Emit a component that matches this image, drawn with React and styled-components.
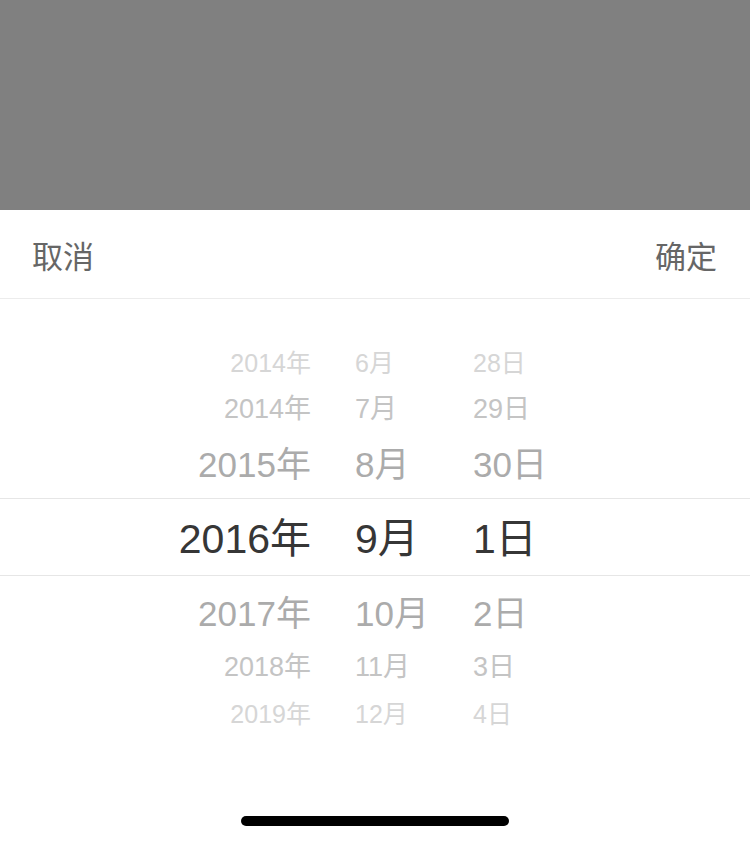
import React from "react";
import styled, { createGlobalStyle } from "styled-components";

const Global = createGlobalStyle`
  html, body { margin: 0; padding: 0; background: #808080; }
  body { font-family: "Liberation Sans", "Noto Sans CJK SC", sans-serif; }
  #root { min-height: 844px; }
`;

const Screen = styled.div`
  width: 750px;
  height: 844px;
  display: flex;
  flex-direction: column;
  background: #808080;
  overflow: hidden;
`;

const Mask = styled.div`
  height: 210px;
  flex: none;
`;

const Sheet = styled.div`
  flex: 1;
  background: #fff;
  display: flex;
  flex-direction: column;
`;

const Header = styled.div`
  height: 88px;
  border-bottom: 1px solid #ececec;
  display: flex;
  align-items: center;
  justify-content: space-between;
  padding: 0 33px 0 32px;
`;

const Action = styled.span`
  font-family: "Noto Sans CJK SC", sans-serif;
  font-size: 31px;
  color: #666;
  line-height: 1;
`;

const Picker = styled.div`
  padding-top: 36px;
  display: flex;
  flex-direction: column;
`;

const Row = styled.div`
  height: ${(p) => p.$h}px;
  display: grid;
  grid-template-columns: 311px 118px 1fr;
  align-items: center;
  font-size: ${(p) => p.$size}px;
  color: ${(p) => p.$color};
  border-top: ${(p) => (p.$active ? "1px solid #e6e6e6" : "none")};
  border-bottom: ${(p) => (p.$active ? "1px solid #e6e6e6" : "none")};
  box-sizing: border-box;
  line-height: 1;
`;

const Cell = styled.span`
  text-align: ${(p) => (p.$right ? "right" : "left")};
  padding-left: ${(p) => (p.$right ? 0 : 44)}px;
  white-space: nowrap;
`;

const Num = styled.span`
  font-family: "Liberation Sans", sans-serif;
`;

const Cjk = styled.span`
  font-family: "Noto Sans CJK SC", sans-serif;
`;

const Bottom = styled.div`
  flex: 1;
  display: flex;
  align-items: flex-end;
  justify-content: center;
  padding-bottom: 18px;
`;

const HomeBar = styled.div`
  width: 268px;
  height: 10px;
  border-radius: 5px;
  background: #000;
`;

const rows = [
  { y: "2014", m: "6", d: "28", h: 54, size: 25, color: "#d6d6d6" },
  { y: "2014", m: "7", d: "29", h: 38, size: 27, color: "#c4c4c4" },
  { y: "2015", m: "8", d: "30", h: 71, size: 35, color: "#ababab" },
  { y: "2016", m: "9", d: "1", h: 78, size: 41, color: "#363636", active: true },
  { y: "2017", m: "10", d: "2", h: 72, size: 35, color: "#ababab" },
  { y: "2018", m: "11", d: "3", h: 36, size: 27, color: "#c4c4c4" },
  { y: "2019", m: "12", d: "4", h: 58, size: 25, color: "#d6d6d6" },
];

const Label = ({ n, unit }) => (
  <>
    <Num>{n}</Num>
    <Cjk>{unit}</Cjk>
  </>
);

export default function App() {
  return (
    <Screen>
      <Global />
      <Mask />
      <Sheet>
        <Header>
          <Action>取消</Action>
          <Action>确定</Action>
        </Header>
        <Picker>
          {rows.map((r, i) => (
            <Row key={i} $h={r.h} $size={r.size} $color={r.color} $active={r.active}>
              <Cell $right>
                <Label n={r.y} unit="年" />
              </Cell>
              <Cell>
                <Label n={r.m} unit="月" />
              </Cell>
              <Cell>
                <Label n={r.d} unit="日" />
              </Cell>
            </Row>
          ))}
        </Picker>
        <Bottom>
          <HomeBar />
        </Bottom>
      </Sheet>
    </Screen>
  );
}
